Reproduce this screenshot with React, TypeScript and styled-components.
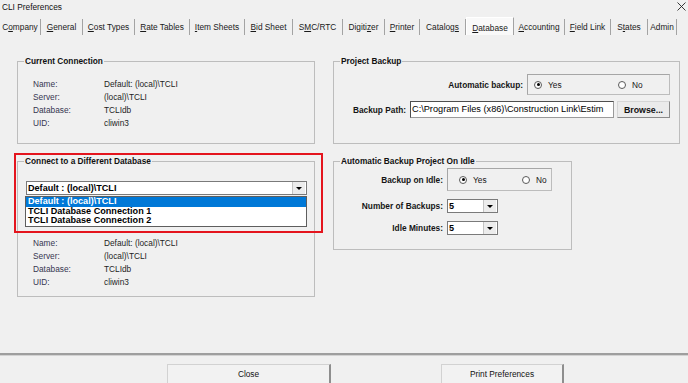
import styled, { createGlobalStyle } from 'styled-components'

const GlobalStyle = createGlobalStyle`
  html, body {
    margin: 0;
    padding: 0;
    background: #f0f0f0;
  }
  body {
    font-family: "Liberation Sans", Arial, sans-serif;
    font-size: 8.3px;
    color: #111;
  }
`

const Window = styled.div`
  width: 688px;
  height: 383px;
  overflow: hidden;
  display: flex;
  flex-direction: column;
  background: #f0f0f0;
`

const TitleBar = styled.div`
  flex: none;
  height: 14px;
  display: flex;
  align-items: center;
  justify-content: space-between;
  padding: 0 2px 0 2px;
  color: #111;
`

const CloseX = styled.svg`
  width: 9px;
  height: 9px;
  margin-top: -1px;
`

const TabStrip = styled.div`
  flex: none;
  height: 21px;
  box-sizing: border-box;
  padding-top: 3px;
  display: flex;
  align-items: flex-end;
`

const Tab = styled.div<{ $w: number; $active?: boolean }>`
  flex: none;
  width: ${(p) => p.$w}px;
  height: ${(p) => (p.$active ? 18 : 16)}px;
  box-sizing: border-box;
  display: flex;
  align-items: center;
  justify-content: center;
  padding-top: ${(p) => (p.$active ? 2 : 0)}px;
  white-space: nowrap;
  color: #1a1a1a;
  border-right: 1px solid #a3a3a3;
  background: ${(p) => (p.$active ? '#f9f9f9' : 'transparent')};
  border-left: ${(p) => (p.$active ? '1px solid #ffffff' : 'none')};
  border-top: ${(p) => (p.$active ? '1px solid #ffffff' : 'none')};
`

const Key = styled.u`
  text-decoration: underline;
  text-underline-offset: 1px;
`

const Body = styled.div`
  flex: none;
  height: 318px;
  box-sizing: border-box;
  padding: 21px 0 0 17px;
  display: grid;
  grid-template-columns: 298px 347px;
  column-gap: 18px;
  row-gap: 12px;
  align-content: start;
  align-items: start;
`

const Cell = styled.div`
  position: relative;
`

const Group = styled.fieldset<{ $w?: number }>`
  margin: 0;
  padding: 0;
  min-width: 0;
  width: ${(p) => (p.$w ? `${p.$w}px` : 'auto')};
  box-sizing: border-box;
  border: 1px solid #bdbdbd;
`

const Legend = styled.legend`
  margin-left: 6px;
  padding: 0 1px;
  font-weight: bold;
  line-height: 10px;
  color: #111;
`

const InfoList = styled.div<{ $pt: number; $pb: number }>`
  display: grid;
  grid-template-columns: 71px 1fr;
  grid-auto-rows: 13px;
  align-items: center;
  padding: ${(p) => p.$pt}px 0 ${(p) => p.$pb}px 15px;
`

const InfoLabel = styled.span`
  color: #363650;
`

const InfoValue = styled.span`
  color: #1e1e1e;
`

const Highlight = styled.div`
  position: absolute;
  top: -3px;
  left: -3px;
  width: 309px;
  height: 80px;
  box-sizing: border-box;
  border: 2px solid #e4151e;
  pointer-events: none;
  z-index: 2;
`

const ComboWrap = styled.div`
  position: relative;
  margin: 15px 8px 0 8px;
`

const Combo = styled.div<{ $w: number }>`
  display: flex;
  width: ${(p) => p.$w}px;
  height: 14px;
  box-sizing: border-box;
  background: #fff;
  border: 1px solid #7a7a7a;
`

const ComboText = styled.span`
  flex: 1;
  padding-left: 1px;
  font-weight: bold;
  font-size: 9.1px;
  line-height: 12px;
  color: #000;
  white-space: nowrap;
  overflow: hidden;
`

const ArrowBtn = styled.span`
  flex: none;
  width: 12px;
  margin: 0 1px 0 0;
  display: flex;
  align-items: center;
  justify-content: center;
  background: #ececec;
  border-left: 1px solid #c4c4c4;
  &::after {
    content: '';
    border-left: 3px solid transparent;
    border-right: 3px solid transparent;
    border-top: 3px solid #000;
  }
`

const DropList = styled.div`
  position: absolute;
  top: 15px;
  left: -1px;
  width: 282px;
  box-sizing: border-box;
  background: #fff;
  border: 1px solid #5e5e5e;
  z-index: 1;
`

const DropItem = styled.div<{ $active?: boolean }>`
  height: 9.5px;
  line-height: 9.5px;
  padding-left: 2px;
  font-weight: bold;
  font-size: 9.1px;
  white-space: nowrap;
  color: ${(p) => (p.$active ? '#fff' : '#000')};
  background: ${(p) => (p.$active ? '#0078d7' : 'transparent')};
`

const FormBlock = styled.div<{ $pb: number }>`
  padding: 0 9px ${(p) => p.$pb}px 0;
`

const FormRow = styled.div<{ $mt: number }>`
  display: flex;
  justify-content: flex-end;
  align-items: center;
  gap: 4px;
  margin-top: ${(p) => p.$mt}px;
`

const FieldLabel = styled.span`
  font-weight: bold;
  color: #151515;
  white-space: nowrap;
`

const RadioBox = styled.div<{ $w: number; $h: number; $pl: number }>`
  display: flex;
  align-items: center;
  width: ${(p) => p.$w}px;
  height: ${(p) => p.$h}px;
  padding-left: ${(p) => p.$pl}px;
  box-sizing: border-box;
  border: 1px solid #bcbcbc;
  border-top-color: #a6a6a6;
  border-left-color: #a6a6a6;
`

const RadioOption = styled.label<{ $w?: number }>`
  display: flex;
  align-items: center;
  gap: 6px;
  width: ${(p) => (p.$w ? `${p.$w}px` : 'auto')};
  color: #151515;
`

const RadioDot = styled.span<{ $on?: boolean }>`
  position: relative;
  width: 8px;
  height: 8px;
  box-sizing: border-box;
  border-radius: 50%;
  border: 1px solid #5a5a5a;
  background: #fff;
  &::after {
    content: '';
    display: ${(p) => (p.$on ? 'block' : 'none')};
    position: absolute;
    left: 1.5px;
    top: 1.5px;
    width: 3px;
    height: 3px;
    border-radius: 50%;
    background: #000;
  }
`

const TextField = styled.div`
  width: 204px;
  height: 17px;
  box-sizing: border-box;
  padding-left: 1px;
  background: #fff;
  border: 1px solid #9a9a9a;
  border-top-color: #4e4e4e;
  border-left-color: #4e4e4e;
  font-size: 9.2px;
  line-height: 15px;
  color: #000;
  white-space: nowrap;
  overflow: hidden;
`

const SmallButton = styled.button`
  width: 53px;
  height: 17px;
  margin-left: -1px;
  padding: 0;
  box-sizing: border-box;
  font-family: inherit;
  font-size: 8.8px;
  font-weight: bold;
  color: #111;
  background: #ebebeb;
  border: 1px solid #d6d6d6;
  border-right-color: #8a8a8a;
  border-bottom-color: #8a8a8a;
`

const IdleGrid = styled.div`
  display: grid;
  grid-template-columns: 109px auto;
  grid-template-rows: 23px 14px 14px;
  column-gap: 4px;
  row-gap: 8px;
  align-items: center;
  justify-content: start;
  padding: 2px 0 14px 0;
`

const RightLabel = styled(FieldLabel)`
  text-align: right;
`

const Separator = styled.div`
  flex: none;
  height: 2px;
  background: #9e9e9e;
  border-bottom: 1px solid #d2d2d2;
`

const Footer = styled.div`
  flex: none;
  display: flex;
  gap: 110px;
  padding: 8px 0 0 167px;
`

const FooterButton = styled.button<{ $w: number }>`
  width: ${(p) => p.$w}px;
  height: 22px;
  padding: 0 0 2px 0;
  box-sizing: border-box;
  font-family: inherit;
  font-size: 8.3px;
  color: #111;
  background: #f2f2f2;
  border: 1px solid #d2d2d2;
  border-right: 2px solid #8e8e8e;
`

const tabs: { label: React.ReactNode; w: number; active?: boolean }[] = [
  { label: <>C<Key>o</Key>mpany</>, w: 41 },
  { label: <><Key>G</Key>eneral</>, w: 42 },
  { label: <><Key>C</Key>ost Types</>, w: 52 },
  { label: <><Key>R</Key>ate Tables</>, w: 55 },
  { label: <><Key>I</Key>tem Sheets</>, w: 55 },
  { label: <><Key>B</Key>id Sheet</>, w: 48 },
  { label: <>S<Key>M</Key>C/RTC</>, w: 50 },
  { label: <>Digiti<Key>z</Key>er</>, w: 42 },
  { label: <><Key>P</Key>rinter</>, w: 35 },
  { label: <>Catalog<Key>s</Key></>, w: 46 },
  { label: <><Key>D</Key>atabase</>, w: 48, active: true },
  { label: <><Key>A</Key>ccounting</>, w: 51 },
  { label: <><Key>F</Key>ield Link</>, w: 46 },
  { label: <>S<Key>t</Key>ates</>, w: 37 },
  { label: <>Admin</>, w: 29 },
]

const connection = [
  ['Name:', 'Default: (local)\\TCLI'],
  ['Server:', '(local)\\TCLI'],
  ['Database:', 'TCLIdb'],
  ['UID:', 'cliwin3'],
]

const connections = ['Default : (local)\\TCLI', 'TCLI Database Connection 1', 'TCLI Database Connection 2']

const Info = ({ pt, pb }: { pt: number; pb: number }) => (
  <InfoList $pt={pt} $pb={pb}>
    {connection.map(([k, v]) => (
      <>
        <InfoLabel key={k}>{k}</InfoLabel>
        <InfoValue key={k + 'v'}>{v}</InfoValue>
      </>
    ))}
  </InfoList>
)

const YesNo = ({ w, h, pl, yesW }: { w: number; h: number; pl: number; yesW: number }) => (
  <RadioBox $w={w} $h={h} $pl={pl}>
    <RadioOption $w={yesW}>
      <RadioDot $on />
      Yes
    </RadioOption>
    <RadioOption>
      <RadioDot />
      No
    </RadioOption>
  </RadioBox>
)

const App = () => {
  return (
    <Window>
      <GlobalStyle />
      <TitleBar>
        <span>CLI Preferences</span>
        <CloseX viewBox="0 0 9 9">
          <path d="M0.5 0.5 L8.5 8.5 M8.5 0.5 L0.5 8.5" stroke="#222" strokeWidth="0.9" fill="none" />
        </CloseX>
      </TitleBar>

      <TabStrip>
        {tabs.map((t, i) => (
          <Tab key={i} $w={t.w} $active={t.active}>
            {t.label}
          </Tab>
        ))}
      </TabStrip>

      <Body>
        <Cell>
          <Group>
            <Legend>Current Connection</Legend>
            <Info pt={11} pb={14} />
          </Group>
        </Cell>

        <Cell>
          <Group>
            <Legend>Project Backup</Legend>
            <FormBlock $pb={25}>
              <FormRow $mt={8}>
                <FieldLabel>Automatic backup:</FieldLabel>
                <YesNo w={143} h={21} pl={6} yesW={84} />
              </FormRow>
              <FormRow $mt={6}>
                <FieldLabel>Backup Path:</FieldLabel>
                <TextField>C:\Program Files (x86)\Construction Link\Estim</TextField>
                <SmallButton>Browse...</SmallButton>
              </FormRow>
            </FormBlock>
          </Group>
        </Cell>

        <Cell>
          <Highlight />
          <Group>
            <Legend>Connect to a Different Database</Legend>
            <ComboWrap>
              <Combo $w={281}>
                <ComboText>{connections[0]}</ComboText>
                <ArrowBtn />
              </Combo>
              <DropList>
                {connections.map((c, i) => (
                  <DropItem key={c} $active={i === 0}>
                    {c}
                  </DropItem>
                ))}
              </DropList>
            </ComboWrap>
            <Info pt={41} pb={8} />
          </Group>
        </Cell>

        <Cell>
          <Group $w={239}>
            <Legend>Automatic Backup Project On Idle</Legend>
            <IdleGrid>
              <RightLabel>Backup on Idle:</RightLabel>
              <YesNo w={105} h={23} pl={11} yesW={63} />
              <RightLabel>Number of Backups:</RightLabel>
              <Combo $w={51}>
                <ComboText>5</ComboText>
                <ArrowBtn />
              </Combo>
              <RightLabel>Idle Minutes:</RightLabel>
              <Combo $w={51}>
                <ComboText>5</ComboText>
                <ArrowBtn />
              </Combo>
            </IdleGrid>
          </Group>
        </Cell>
      </Body>

      <Separator />
      <Footer>
        <FooterButton $w={164}>Close</FooterButton>
        <FooterButton $w={123}>Print Preferences</FooterButton>
      </Footer>
    </Window>
  )
}

export default App
